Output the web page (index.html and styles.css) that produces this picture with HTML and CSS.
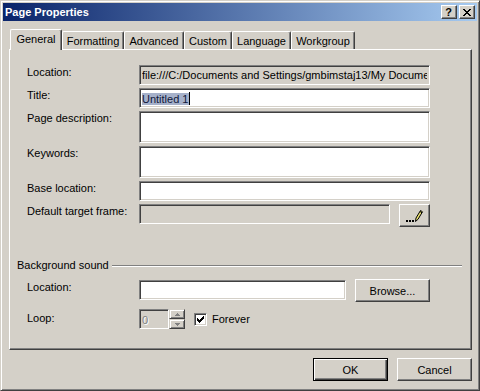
FILE: index.html
```html
<!DOCTYPE html>
<html>
<head>
<meta charset="utf-8">
<link rel="stylesheet" href="styles.css">
</head>
<body>
<div class="window">
  <div class="titlebar">
    <span class="title">Page Properties</span>
    <div class="tb-btns">
      <div class="tb-btn help">?</div>
      <div class="tb-btn close">
        <svg width="8" height="7" viewBox="0 0 8 7"><path d="M0 0h2v1h1v1h2V1h1V0h2v1H7v1H6v1H5v1h1v1h1v1h1v1H6V6H5V5H3v1H2v1H0V6h1V5h1V4h1V3H2V2H1V1H0z" fill="#000"/></svg>
      </div>
    </div>
  </div>

  <div class="tabs">
    <div class="tab active w-general">General</div>
    <div class="tab w-formatting">Formatting</div>
    <div class="tab w-advanced">Advanced</div>
    <div class="tab w-custom">Custom</div>
    <div class="tab w-language">Language</div>
    <div class="tab w-workgroup">Workgroup</div>
  </div>

  <div class="panel">
    <div class="fields">
      <div class="label">Location:</div>
      <div class="field readonly h20"><span class="clip">file:///C:/Documents and Settings/gmbimstaj13/My Documents/My Webs/Untitled_1.htm</span></div>

      <div class="label">Title:</div>
      <div class="field h20"><span class="sel">Untitled 1</span><span class="caret"></span></div>

      <div class="label">Page description:</div>
      <div class="field h32"></div>

      <div class="label">Keywords:</div>
      <div class="field h32"></div>

      <div class="label">Base location:</div>
      <div class="field h20"></div>

      <div class="label">Default target frame:</div>
      <div class="frame-row">
        <div class="field disabled h20 frame-input"></div>
        <div class="btn pick-btn">
          <svg width="29" height="21" viewBox="0 0 29 21">
            <rect x="6" y="15" width="2" height="2" fill="#000"/>
            <rect x="9" y="15" width="2" height="2" fill="#000"/>
            <rect x="12" y="15" width="2" height="2" fill="#000"/>
            <path d="M15.5 16.5 L16 13 L20.5 5.5 L22.5 6.8 L18 14.3 Z" fill="#E8E070" stroke="#000" stroke-width="1"/>
            <path d="M20 6.5 L22 7.8" stroke="#000" stroke-width="1"/>
          </svg>
        </div>
      </div>
    </div>

    <div class="group-head">
      <span>Background sound</span>
      <span class="etch"></span>
    </div>

    <div class="sound">
      <div class="label s-label">Location:</div>
      <div class="field h20 sound-input"></div>
      <div class="btn browse">Browse...</div>

      <div class="label loop-label">Loop:</div>
      <div class="loop-row">
        <div class="field disabled h20 spin-input"><span class="dis-text">0</span></div>
        <div class="spin">
          <div class="spin-btn"><svg width="5" height="3" viewBox="0 0 5 3"><path d="M2 0h1v1h1v1h1v1H0V2h1V1h1z" fill="#808080"/></svg></div>
          <div class="spin-btn"><svg width="5" height="3" viewBox="0 0 5 3"><path d="M0 0h5v1H4v1H3v1H2V2H1V1H0z" fill="#808080"/></svg></div>
        </div>
        <div class="checkbox">
          <svg width="7" height="7" viewBox="0 0 7 7"><path d="M6 0h1v3H6v1H5v1H4v1H3v1H2V6H1V5H0V2h1v1h1v1h1V3h1V2h1V1h1z" fill="#000"/></svg>
        </div>
        <span class="cb-label">Forever</span>
      </div>
    </div>
  </div>

  <div class="footer">
    <div class="btn default">OK</div>
    <div class="btn">Cancel</div>
  </div>
</div>
</body>
</html>
```

FILE: styles.css
```css
* { box-sizing: border-box; }
html, body { margin: 0; padding: 0; }
body {
  width: 480px;
  height: 391px;
  overflow: hidden;
  background: #D4D0C8;
  font-family: "Liberation Sans", Arial, sans-serif;
  font-size: 11px;
  color: #000;
}
.window {
  width: 480px;
  height: 391px;
  background: #D4D0C8;
  border: 1px solid;
  border-color: #D4D0C8 #404040 #404040 #D4D0C8;
  box-shadow: inset 1px 1px #fff, inset -1px -1px #808080;
  padding: 2px;
  display: flex;
  flex-direction: column;
}
.titlebar {
  height: 18px;
  flex: none;
  background: linear-gradient(to right, #0A246A, #A6CAF0);
  display: flex;
  align-items: center;
  padding: 0 2px 0 2px;
}
.title {
  flex: 1;
  color: #fff;
  font-weight: bold;
  font-size: 11px;
  line-height: 18px;
}
.tb-btns { display: flex; gap: 2px; }
.tb-btn {
  width: 16px;
  height: 14px;
  background: #D4D0C8;
  border: 1px solid;
  border-color: #fff #404040 #404040 #fff;
  box-shadow: inset -1px -1px #808080;
  display: flex;
  align-items: center;
  justify-content: center;
}
.tb-btn.help {
  font-weight: bold;
  font-size: 11px;
  line-height: 12px;
  padding-right: 1px;
}
.tb-btn.close svg { margin-left: -1px; }

.tabs {
  display: flex;
  align-items: flex-end;
  height: 20px;
  margin: 8px 0 0 7px;
  position: relative;
  z-index: 2;
  flex: none;
}
.tab {
  height: 18px;
  border-top: 1px solid #fff;
  border-left: 1px solid #fff;
  border-right: 1px solid #404040;
  box-shadow: inset -1px 0 #808080;
  border-radius: 2px 2px 0 0;
  background: #D4D0C8;
  text-align: center;
  line-height: 17px;
  padding-top: 1px;
}
.tab.active {
  height: 21px;
  margin-bottom: -1px;
  line-height: 17px;
}
.w-general { width: 52px; }
.w-formatting { width: 62px; }
.w-advanced { width: 60px; }
.w-custom { width: 48px; }
.w-language { width: 59px; }
.w-workgroup { width: 64px; }

.panel {
  height: 301px;
  margin: 0 5px 0 6px;
  flex: none;
  border: 1px solid;
  border-color: #fff #404040 #404040 #fff;
  box-shadow: inset -1px -1px #808080;
  padding-top: 15px;
  display: flex;
  flex-direction: column;
}
.fields {
  display: grid;
  grid-template-columns: 112px 291px;
  row-gap: 3px;
  margin-left: 17px;
}
.label {
  line-height: 13px;
  padding-top: 1px;
  white-space: nowrap;
}
.field {
  background: #fff;
  border: 1px solid;
  border-color: #808080 #fff #fff #808080;
  box-shadow: inset 1px 1px #404040, inset -1px -1px #D4D0C8;
  padding: 2px 2px 0 2px;
  line-height: 14px;
  overflow: hidden;
  white-space: nowrap;
  position: relative;
}
.field.readonly, .field.disabled { background: #D4D0C8; }
.h20 { height: 20px; }
.h32 { height: 32px; }
.clip { display: block; overflow: hidden; white-space: nowrap; }
.sel {
  background: #A6B1CA;
  color: #10183A;
  display: inline-block;
  line-height: 12px;
  padding: 0 1px 0 0;
  margin-top: 2px;
  vertical-align: top;
}
.caret {
  display: inline-block;
  width: 1px;
  height: 13px;
  background: #000;
  vertical-align: top;
  margin-top: 1px;
}
.frame-row {
  display: flex;
  align-items: flex-start;
  gap: 9px;
}
.frame-input { width: 252px; }

.btn {
  background: #D4D0C8;
  border: 1px solid;
  border-color: #fff #404040 #404040 #fff;
  box-shadow: inset -1px -1px #808080;
  display: flex;
  align-items: center;
  justify-content: center;
  height: 23px;
  width: 75px;
}
.pick-btn { width: 31px; }
.btn.default {
  border: 1px solid #000;
  box-shadow: inset 1px 1px #fff, inset -1px -1px #404040, inset -2px -2px #808080;
}

.group-head {
  margin: 32px 9px 0 7px;
  height: 13px;
  line-height: 13px;
  display: flex;
  align-items: center;
  white-space: nowrap;
}
.etch {
  flex: 1;
  height: 2px;
  margin-left: 3px;
  border-top: 1px solid #808080;
  border-bottom: 1px solid #fff;
}
.sound {
  display: grid;
  grid-template-columns: 103px 207px 75px;
  column-gap: 9px;
  row-gap: 7px;
  margin: 7px 0 0 17px;
}
.sound .label { padding-top: 1px; }
.s-label { padding-top: 2px !important; }
.sound-input { margin-top: 1px; }
.loop-label { padding-top: 3px !important; }
.loop-row {
  grid-column: 2 / 4;
  display: flex;
  align-items: center;
  height: 20px;
}
.spin-input { width: 30px; padding-top: 3px; padding-left: 2px; }
.dis-text { color: #808080; text-shadow: 1px 1px #fff; }
.spin {
  width: 16px;
  height: 20px;
  display: flex;
  flex-direction: column;
}
.spin-btn {
  flex: 1;
  background: #D4D0C8;
  border: 1px solid;
  border-color: #D4D0C8 #404040 #404040 #D4D0C8;
  box-shadow: inset 1px 1px #fff, inset -1px -1px #808080;
  display: flex;
  align-items: center;
  justify-content: center;
}
.checkbox {
  width: 13px;
  height: 13px;
  margin-left: 9px;
  background: #fff;
  border: 1px solid;
  border-color: #808080 #fff #fff #808080;
  box-shadow: inset 1px 1px #404040, inset -1px -1px #D4D0C8;
  display: flex;
  align-items: center;
  justify-content: center;
}
.cb-label { margin-left: 5px; line-height: 13px; }

.footer {
  display: flex;
  justify-content: flex-end;
  gap: 9px;
  margin: 8px 5px 0 0;
}
```
